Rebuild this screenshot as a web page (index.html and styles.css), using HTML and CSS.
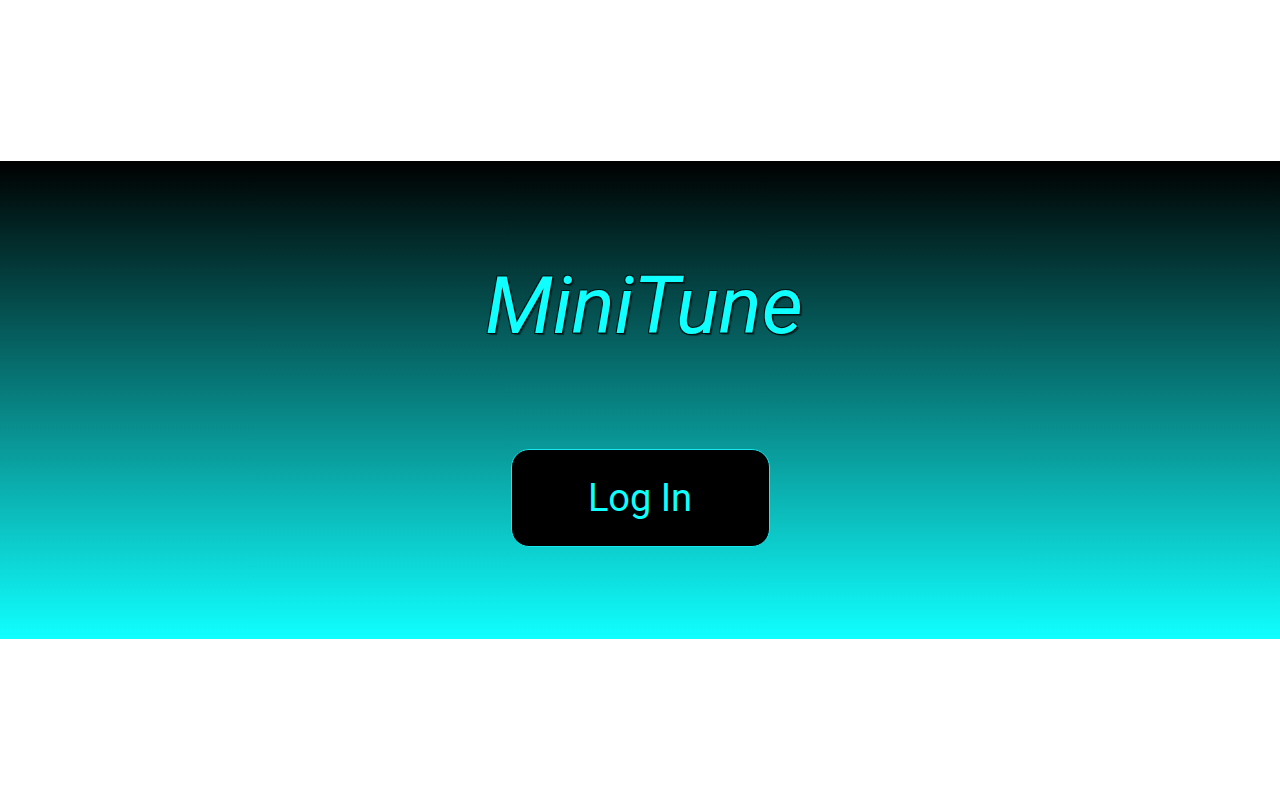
FILE: index.html
```html
<!DOCTYPE html>
<html>
<head>
<meta charset="utf-8">
<link rel="stylesheet" href="styles.css">
<title>MiniTune</title>
</head>
<body>
<div class="page">
  <section class="band">
    <h1 class="title">MiniTune</h1>
    <button class="login">Log In</button>
  </section>
</div>
</body>
</html>
```
FILE: styles.css
```css
html, body {
  margin: 0;
  padding: 0;
  background: #ffffff;
}
.page {
  width: 1280px;
  height: 800px;
  display: flex;
  flex-direction: column;
  justify-content: center;
}
.band {
  height: 478px;
  background: linear-gradient(to bottom, #000000 0%, #10ffff 100%);
  display: flex;
  flex-direction: column;
  align-items: center;
  box-sizing: border-box;
  padding-top: 105px;
}
.title {
  margin: 0;
  padding-left: 8px;
  font-family: Roboto, "Noto Sans", sans-serif;
  font-style: italic;
  font-weight: 400;
  font-size: 80px;
  line-height: 80px;
  color: #10ffff;
  text-shadow: 1px 1px 0 #001515, -1px -1px 0 #001515, 1px -1px 0 #001515, -1px 1px 0 #001515, 1px 0 0 #001515, 0 1px 0 #001515, 2px 2px 1px rgba(0,16,16,0.6);
}
.login {
  margin-top: 103px;
  width: 259px;
  height: 98px;
  background: #000000;
  border: 1px solid #18e8f0;
  border-radius: 18px;
  color: #10ffff;
  font-family: Roboto, "Noto Sans", sans-serif;
  font-size: 38px;
  font-weight: 400;
  padding: 0;
  cursor: pointer;
}
```
